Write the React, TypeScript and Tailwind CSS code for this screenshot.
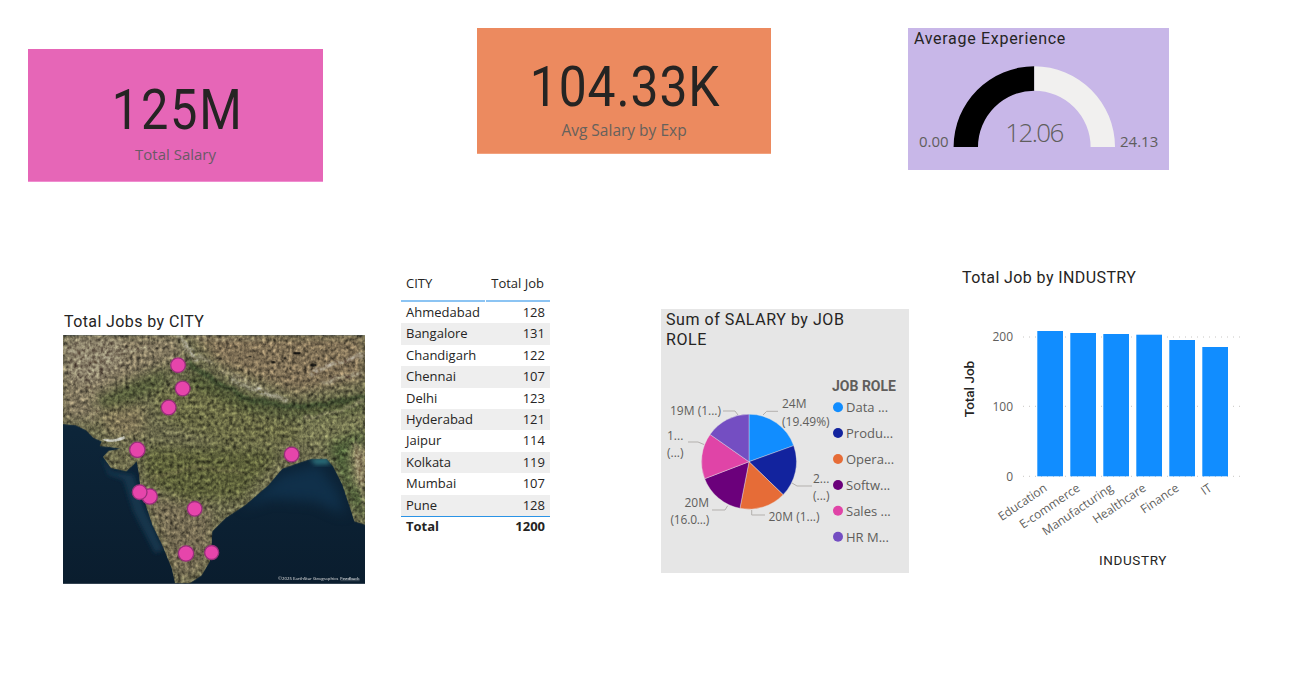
const din = "font-['Roboto',sans-serif]";
const seg = "font-['Open_Sans',sans-serif]";

const rows: [string, number][] = [
  ["Ahmedabad", 128], ["Bangalore", 131], ["Chandigarh", 122], ["Chennai", 107], ["Delhi", 123],
  ["Hyderabad", 121], ["Jaipur", 114], ["Kolkata", 119], ["Mumbai", 107], ["Pune", 128],
];

const pieColors = ["#118DFF", "#12239E", "#E66C37", "#6B007B", "#E044A7", "#744EC2"];
const pieAngles = [0, 70.2, 134, 191, 249, 305, 360];
const legend = ["Data ...", "Produ...", "Opera...", "Softw...", "Sales ...", "HR M..."];
const legendY = [407.3, 433, 459, 485, 510.7, 536.7];

function pt(cx: number, cy: number, r: number, a: number) {
  const t = (a * Math.PI) / 180;
  return [cx + r * Math.sin(t), cy - r * Math.cos(t)];
}

const LAND =
  "M24 358 L62 362 L92 376 L116 400 L140 410 L134 424 L170 428 L196 432 L160 438 L144 456 L168 490 L214 500 L234 482 L245 470 L252 510 L256 548 L272 600 L292 660 L322 722 L350 790 L360 836 L404 836 L440 812 L465 770 L470 720 L472 680 L512 640 L572 600 L640 542 L682 492 L732 474 L770 462 L815 462 L835 486 L862 540 L882 600 L898 650 L930 660 L930 91 L24 91 Z";

function MapArt() {
  const pins: [number, number, number][] = [
    [369, 181, 22], [383, 251, 22], [341, 308, 22], [247, 435, 23], [710, 449, 22],
    [284, 575, 23], [254, 562, 22], [419, 612, 22], [393, 746, 23], [470, 743, 21],
  ];
  return (
    <svg viewBox="24 91 906 746" className="block w-[302px] h-[249px]">
      <defs>
        <filter id="b6" x="-20%" y="-20%" width="140%" height="140%"><feGaussianBlur stdDeviation="6" /></filter>
        <filter id="b14" x="-30%" y="-30%" width="160%" height="160%" colorInterpolationFilters="sRGB"><feGaussianBlur stdDeviation="18" /></filter>
        <filter id="b2"><feGaussianBlur stdDeviation="2" /></filter>
        <filter id="rough" x="-10%" y="-10%" width="120%" height="120%" colorInterpolationFilters="sRGB">
          <feTurbulence type="fractalNoise" baseFrequency="0.04" numOctaves="3" seed="3" result="n" />
          <feDisplacementMap in="SourceGraphic" in2="n" scale="22" xChannelSelector="R" yChannelSelector="G" />
          <feGaussianBlur stdDeviation="2.4" />
        </filter>
        <filter id="noise" x="0" y="0" width="100%" height="100%" colorInterpolationFilters="sRGB">
          <feTurbulence type="fractalNoise" baseFrequency="0.09" numOctaves="3" seed="11" />
          <feColorMatrix type="matrix" values="0.6 0.4 0 0 0  0.6 0.4 0 0 0  0.6 0.4 0 0 0  0 0 0 0 1" />
          <feComponentTransfer>
            <feFuncR type="linear" slope="1.8" intercept="-0.4" />
            <feFuncG type="linear" slope="1.8" intercept="-0.4" />
            <feFuncB type="linear" slope="1.8" intercept="-0.4" />
          </feComponentTransfer>
        </filter>
        <clipPath id="land"><path d={LAND} /></clipPath>
        <linearGradient id="sea" x1="0" y1="0" x2="0" y2="1">
          <stop offset="0" stopColor="#0f2a40" />
          <stop offset="1" stopColor="#0a1d2e" />
        </linearGradient>
      </defs>
      <rect x="24" y="91" width="906" height="746" fill="url(#sea)" />
      <path d="M560 610 L680 510 L790 480 L850 560 L870 630 L780 590 L650 580 Z" fill="#10304a" filter="url(#b14)" />
      <path d="M765 462 L818 458 L826 478 L780 480 Z" fill="#2c6d78" filter="url(#b6)" />
      <path d="M140 455 L170 500 L235 510 L268 610 L325 735 L300 745 L235 620 L205 525 L160 510 Z" fill="#14344b" filter="url(#b6)" />
      <g clipPath="url(#land)">
        <rect x="24" y="91" width="906" height="746" fill="#6b6a4c" />
        <g filter="url(#b14)">
          <path d="M24 91 L370 91 L390 160 L300 190 L200 250 L130 340 L24 350 Z" fill="#7f755d" />
          <path d="M24 91 L200 91 L210 180 L110 240 L24 230 Z" fill="#887e68" />
          <path d="M110 285 L230 225 L340 195 L330 240 L240 290 L140 320 Z" fill="#525a38" />
          <path d="M130 310 L270 300 L260 395 L160 395 Z" fill="#7d7355" />
          <path d="M410 91 L930 91 L930 225 L720 265 L500 185 Z" fill="#7e6f55" />
          <path d="M410 200 L560 275 L700 310 L930 280 L930 320 L700 335 L520 300 L400 235 Z" fill="#414d2b" />
          <path d="M290 260 L420 240 L620 330 L740 360 L720 420 L500 420 L330 350 Z" fill="#696a44" />
          <path d="M260 430 L500 430 L680 440 L560 580 L400 590 L280 540 Z" fill="#5c6039" />
          <path d="M270 570 L470 610 L470 700 L440 800 L370 830 L300 650 Z" fill="#726951" />
          <path d="M730 335 L930 310 L930 390 L820 420 L740 420 Z" fill="#747550" />
          <path d="M820 420 L930 380 L930 650 L885 590 Z" fill="#475a34" />
          <path d="M885 430 L930 420 L930 560 L900 540 Z" fill="#9a8b6c" />
          <path d="M150 445 L240 445 L225 495 L175 495 Z" fill="#6d6b4b" />
        </g>
        <g filter="url(#rough)" fill="none" strokeLinecap="round" strokeLinejoin="round">
          <path d="M372 94 L395 125 L420 165" stroke="#cfcabb" strokeWidth="11" opacity="0.55" />
          <path d="M430 150 L470 175" stroke="#c8bfaa" strokeWidth="8" opacity="0.45" />
          <path d="M530 225 L590 250 L650 272 L690 285" stroke="#dcd7ca" strokeWidth="10" opacity="0.55" />
          <path d="M500 200 L570 225 L640 255" stroke="#b8ad95" strokeWidth="8" opacity="0.4" />
          <path d="M770 205 L830 180 L925 150" stroke="#d5d0c4" strokeWidth="10" opacity="0.5" />
          <path d="M800 235 L860 215 L925 205" stroke="#c8c2b2" strokeWidth="7" opacity="0.4" />
          <path d="M400 95 L520 105 L620 100" stroke="#a89a80" strokeWidth="10" opacity="0.3" />
          <path d="M24 130 L120 170 L210 140 L300 125" stroke="#a79c84" strokeWidth="12" opacity="0.3" />
          <path d="M100 240 L130 300 L112 350" stroke="#9f9476" strokeWidth="12" opacity="0.4" />
          <path d="M404 178 L480 228 L580 285 L700 305 L800 300 L930 275" stroke="#35452a" strokeWidth="15" opacity="0.75" />
          <path d="M745 340 L850 320 L925 288" stroke="#bdb292" strokeWidth="7" opacity="0.45" />
          <path d="M300 610 L330 700 L368 790" stroke="#877c60" strokeWidth="12" opacity="0.4" />
          <path d="M290 520 L420 485 L560 505" stroke="#7a7452" strokeWidth="10" opacity="0.35" />
          <path d="M440 650 L400 690 L450 720" stroke="#998a6c" strokeWidth="8" opacity="0.4" />
          <path d="M900 420 L915 500 L925 600" stroke="#c0ae8c" strokeWidth="10" opacity="0.4" />
        </g>
        <path d="M142 402 Q175 408 208 392 L210 402 Q175 416 150 408 Z" fill="#dfe0da" filter="url(#b2)" opacity="0.85" />
        <g fill="#10100c" filter="url(#b2)" opacity="0.9">
          <ellipse cx="775" cy="181" rx="10" ry="5" />
          <ellipse cx="726" cy="145" rx="11" ry="4" />
          <ellipse cx="655" cy="172" rx="7" ry="3" />
          <ellipse cx="585" cy="155" rx="5" ry="2" />
          <ellipse cx="690" cy="160" rx="4" ry="3" />
        </g>
        <rect x="24" y="91" width="906" height="746" filter="url(#noise)" className="mix-blend-overlay" opacity="0.6" />
      </g>
      {pins.map(([x, y, r], i) => (
        <circle key={i} cx={x} cy={y} r={r} fill="#E645AB" stroke="#98307a" strokeWidth="4" />
      ))}
      <text x="670" y="825" fontSize="13" fill="#e0e0e0" textLength={180} lengthAdjust="spacingAndGlyphs" className={seg}>©2025 EarthStar Geographics</text>
      <text x="856" y="825" fontSize="13" fill="#ffffff" textDecoration="underline" textLength={58} lengthAdjust="spacingAndGlyphs" className={seg}>Feedback</text>
    </svg>
  );
}

function Gauge() {
  return (
    <svg viewBox="908 55 261 115" className="block w-[261px] h-[115px]">
      <path d="M953.6 147 A80.7 80.7 0 0 1 1034.3 66.3 L1034.3 90.7 A56.3 56.3 0 0 0 978 147 Z" fill="#000000" />
      <path d="M1034.3 66.3 A80.7 80.7 0 0 1 1115 147 L1090.6 147 A56.3 56.3 0 0 0 1034.3 90.7 Z" fill="#F1F0EF" />
      <g className={seg} fill="#605E5C">
        <text x="919" y="147" fontSize="15">0.00</text>
        <text x="1120" y="147" fontSize="15">24.13</text>
        <text x="1034" y="142" fontSize="26" textAnchor="middle" fontWeight="300" letterSpacing="-1.6">12.06</text>
      </g>
    </svg>
  );
}

function Pie() {
  const c = { x: 749, y: 461.7, r: 47.5 };
  const lines = [
    "763,415 766.7,411.3 778,411.3",
    "723,411 735,411 738,415",
    "688,442 698,442 704,444.5",
    "792,483 797,486 812,486",
    "751.7,510 751.7,515 765,515",
    "727.7,505.7 725,510 712,510",
  ];
  return (
    <svg viewBox="661 360 248 213" className="block w-[248px] h-[213px]">
      {pieColors.map((col, i) => {
        const [x1, y1] = pt(c.x, c.y, c.r, pieAngles[i]);
        const [x2, y2] = pt(c.x, c.y, c.r, pieAngles[i + 1]);
        return <path key={col} d={`M${c.x} ${c.y} L${x1} ${y1} A${c.r} ${c.r} 0 0 1 ${x2} ${y2} Z`} fill={col} stroke="#e6e6e6" strokeWidth="0.4" />;
      })}
      {lines.map((p) => (
        <polyline key={p} points={p} fill="none" stroke="#b3b0ad" strokeWidth="1" />
      ))}
      <g className={seg} fill="#605E5C" fontSize="12">
        <text x="782" y="408">24M</text>
        <text x="782" y="425.5">(19.49%)</text>
        <text x="813" y="483">2...</text>
        <text x="813" y="500">(...)</text>
        <text x="768.5" y="521">20M (1...)</text>
        <text x="709" y="507" textAnchor="end">20M</text>
        <text x="709" y="524" textAnchor="end" letterSpacing="-0.2">(16.0...)</text>
        <text x="667" y="440">1...</text>
        <text x="667" y="457">(...)</text>
        <text x="670" y="415">19M (1...)</text>
      </g>
      <text x="832" y="391" fontSize="14" fontWeight="700" fill="#605E5C" className={din}>JOB ROLE</text>
      {legend.map((l, i) => (
        <g key={l}>
          <circle cx="838" cy={legendY[i]} r="5" fill={pieColors[i]} />
          <text x="846" y={legendY[i] + 5} fontSize="13" fill="#605E5C" className={seg}>{l}</text>
        </g>
      ))}
    </svg>
  );
}

function Bars() {
  const tops = [331, 333, 334, 334.7, 340, 347];
  const xs = [1037.3, 1070.3, 1103.3, 1136.3, 1169.3, 1202.3];
  const labels = ["Education", "E-commerce", "Manufacturing", "Healthcare", "Finance", "IT"];
  return (
    <svg viewBox="961 300 290 280" className="block w-[290px] h-[280px]">
      {[337, 406.3, 476.3].map((y) => (
        <line key={y} x1="1023" x2="1240" y1={y} y2={y} stroke="#c8c6c4" strokeWidth="1" strokeDasharray="1 5" />
      ))}
      {xs.map((x, i) => (
        <rect key={x} x={x} y={tops[i]} width="25.7" height={476.3 - tops[i]} fill="#118DFF" />
      ))}
      <g className={seg} fill="#605E5C" fontSize="12" textAnchor="end">
        <text x="1013" y="341">200</text>
        <text x="1013" y="411">100</text>
        <text x="1013" y="481">0</text>
        {labels.map((l, i) => (
          <text key={l} transform={`translate(${xs[i] + 10.5} 490) rotate(-34)`} textAnchor="end">{l}</text>
        ))}
      </g>
      <text transform="translate(974 389) rotate(-90)" textAnchor="middle" fontSize="13.5" fontWeight="500" fill="#252423" className={din}>Total Job</text>
      <text x="1133" y="565" textAnchor="middle" fontSize="13.5" letterSpacing="0.6" fill="#252423" className={din}>INDUSTRY</text>
    </svg>
  );
}

export default function App() {
  return (
    <div className="w-[1302px] h-[679px] bg-white overflow-hidden">
      <div className="flex items-start h-[268px] pl-[28px]">
        <div className="mt-[49px] w-[295px] h-[133px] bg-[#E666B7] border-b border-[#f08dd0] flex flex-col items-center">
          <div className={`${din} mt-[28px] ml-[4px] text-[56px] leading-[66px] tracking-[2px] scale-x-[0.87] text-[#252423]`}>125M</div>
          <div className={`${seg} mt-[1px] text-[15px] leading-[20px] text-[#6a5a66]`}>Total Salary</div>
        </div>
        <div className="ml-[154px] mt-[28px] w-[294px] h-[126px] bg-[#EC8A5F] border-b border-[#f3a27e] flex flex-col items-center">
          <div className={`${din} mt-[26px] ml-[2px] text-[56px] leading-[66px] tracking-[1px] scale-x-[0.89] text-[#252423]`}>104.33K</div>
          <div className={`${seg} text-[15.5px] leading-[20px] text-[#66615c]`}>Avg Salary by Exp</div>
        </div>
        <div className="ml-[137px] mt-[28px] w-[261px] h-[142px] bg-[#C8B7E8]">
          <div className={`${din} pl-[6px] h-[27px] text-[16px] leading-[21px] tracking-[0.7px] text-[#252423]`}>Average Experience</div>
          <Gauge />
        </div>
      </div>

      <div className="flex items-start pl-[63px]">
        <div className="mt-[43px] w-[302px]">
          <div className={`${din} h-[24px] pl-[1px] text-[16px] leading-[21px] tracking-[0.4px] text-[#252423]`}>Total Jobs by CITY</div>
          <MapArt />
        </div>

        <div className={`${seg} ml-[36px] mt-[4px] w-[149px] text-[13px] text-[#252423]`}>
          <div className="flex h-[30px] gap-[1px]">
            <div className="w-[84px] px-[5px] border-b-2 border-[#8cc4f3] leading-[22px]">CITY</div>
            <div className="flex-1 pl-[5px] pr-[6px] border-b-2 border-[#8cc4f3] leading-[22px] text-right whitespace-nowrap">Total Job</div>
          </div>
          {rows.map(([city, n], i) => (
            <div key={city} className={`flex justify-between px-[5px] h-[21.4px] leading-[21px] ${i % 2 === 1 ? "bg-[#EEEEEE]" : "bg-white"}`}>
              <span>{city}</span>
              <span>{n}</span>
            </div>
          ))}
          <div className="flex justify-between px-[5px] h-[22px] leading-[18px] font-bold border-t border-[#2a93e6]">
            <span>Total</span>
            <span>1200</span>
          </div>
        </div>

        <div className="ml-[111px] mt-[41px] w-[248px] h-[264px] bg-[#E6E6E6]">
          <div className={`${din} h-[51px] pl-[5px] pt-[1px] text-[16px] leading-[20px] tracking-[0.55px] text-[#252423]`}>
            Sum of SALARY by JOB<br />ROLE
          </div>
          <Pie />
        </div>

        <div className="ml-[52px] w-[290px]">
          <div className={`${din} h-[32px] pl-[1px] text-[16px] leading-[20px] tracking-[0.4px] text-[#252423]`}>Total Job by INDUSTRY</div>
          <Bars />
        </div>
      </div>
    </div>
  );
}
